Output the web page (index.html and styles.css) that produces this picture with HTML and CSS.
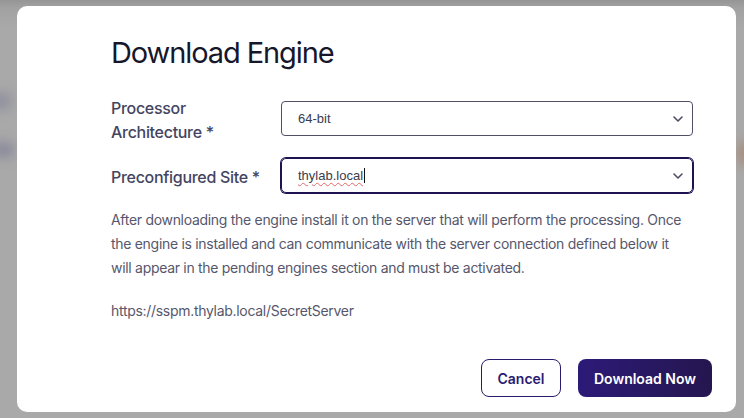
FILE: index.html
```html
<!DOCTYPE html>
<html lang="en">
<head>
<meta charset="utf-8">
<title>Download Engine</title>
<link rel="stylesheet" href="styles.css">
</head>
<body>
<div class="backdrop">
  <div class="blob blob-a"></div>
  <div class="blob blob-b"></div>
  <div class="blob blob-c"></div>
  <div class="modal">
    <h1 class="title">Download Engine</h1>
    <div class="form">
      <div class="row">
        <label class="label">Processor Architecture *</label>
        <div class="select">
          <span class="value">64-bit</span>
          <svg class="chev" width="10" height="6" viewBox="0 0 10 6"><path d="M1 1 L5 5 L9 1" fill="none" stroke="#4d4d63" stroke-width="1.6" stroke-linecap="round" stroke-linejoin="round"/></svg>
        </div>
      </div>
      <div class="row row2">
        <label class="label">Preconfigured Site *</label>
        <div class="select focus">
          <span class="value"><span class="spell">thylab.local</span><span class="caret"></span></span>
          <svg class="chev" width="10" height="6" viewBox="0 0 10 6"><path d="M1 1 L5 5 L9 1" fill="none" stroke="#4d4d63" stroke-width="1.6" stroke-linecap="round" stroke-linejoin="round"/></svg>
        </div>
      </div>
    </div>
    <p class="desc">After downloading the engine install it on the server that will perform the processing. Once the engine is installed and can communicate with the server connection defined below it will appear in the pending engines section and must be activated.</p>
    <p class="url">https://sspm.thylab.local/SecretServer</p>
    <div class="footer">
      <button class="btn btn-outline">Cancel</button>
      <button class="btn btn-primary">Download Now</button>
    </div>
  </div>
</div>
</body>
</html>
```

FILE: styles.css
```css
* { box-sizing: border-box; }
html, body { margin: 0; padding: 0; }
body {
  width: 744px;
  height: 418px;
  overflow: hidden;
  font-family: Inter, "Noto Sans", sans-serif;
}
.backdrop {
  position: relative;
  width: 744px;
  height: 418px;
  background: linear-gradient(to bottom, #959596 0px, #a2a2a3 8px, #a9a9a9 30px, #a9a9a9 100%);
  padding: 6px 8px 6px 17px;
  display: flex;
}
.blob { position: absolute; border-radius: 50%; filter: blur(6px); }
.blob-a { left: -10px; top: 92px; width: 22px; height: 18px; background: #8f8f9f; }
.blob-b { left: -10px; top: 142px; width: 26px; height: 16px; background: #8a8a9c; }
.blob-c { left: 738px; top: 140px; width: 14px; height: 26px; background: #a78a78; }
.modal {
  position: relative;
  flex: 1;
  background: #ffffff;
  border-radius: 10px;
  padding: 29px 24px 15px 94px;
  display: flex;
  flex-direction: column;
}
.title {
  margin: 0 0 22px 0;
  font-size: 29px;
  line-height: 36px;
  font-weight: 400;
  color: #17172b;
  letter-spacing: -1.1px;
}
.form {
  display: flex;
  flex-direction: column;
  gap: 14px;
  margin-right: 19px;
}
.row {
  display: grid;
  grid-template-columns: 170px 1fr;
  align-items: center;
}
.label {
  font-size: 16px;
  line-height: 24px;
  font-weight: 500;
  color: #44445f;
  padding-right: 8px;
  letter-spacing: -0.3px;
  padding-top: 3px;
}
.row2 { min-height: 35px; }
.select {
  height: 35px;
  border: 1px solid #4f5066;
  border-radius: 4px;
  display: flex;
  align-items: center;
  justify-content: space-between;
  padding: 0 8px 0 16px;
  font-family: "Liberation Sans", Arial, sans-serif;
  font-size: 13px;
  color: #3b3b4c;
}
.select.focus {
  border-color: #1f1250;
  box-shadow: 0 0 0 1px #1f1250;
  border-radius: 5px;
}
.value { display: flex; align-items: center; }
.spell {
  text-decoration: underline wavy #e06a6a;
  text-decoration-thickness: 1px;
  text-underline-offset: 2px;
}
.caret {
  display: inline-block;
  width: 1px;
  height: 15px;
  background: #111;
  margin-left: 1px;
}
.chev { margin-right: 1px; }
.desc {
  margin: 15px 20px 0 0;
  font-size: 14px;
  line-height: 24px;
  color: #56576c;
  letter-spacing: -0.3px;
}
.url {
  margin: 19px 0 0 0;
  font-size: 14px;
  line-height: 24px;
  color: #56576c;
  letter-spacing: -0.3px;
}
.footer {
  margin-top: auto;
  display: flex;
  justify-content: flex-end;
  gap: 17px;
}
.btn {
  height: 38px;
  border-radius: 8px;
  font-family: Inter, "Noto Sans", sans-serif;
  font-size: 14px;
  font-weight: 600;
  padding: 0;
  white-space: nowrap;
  cursor: pointer;
}
.btn-outline {
  width: 80px;
  background: #ffffff;
  border: 1px solid #2a1b70;
  color: #2a1b70;
}
.btn-primary {
  width: 134px;
  border: none;
  color: #ffffff;
  background: linear-gradient(to right, #2c1a78, #25164f);
}
```
